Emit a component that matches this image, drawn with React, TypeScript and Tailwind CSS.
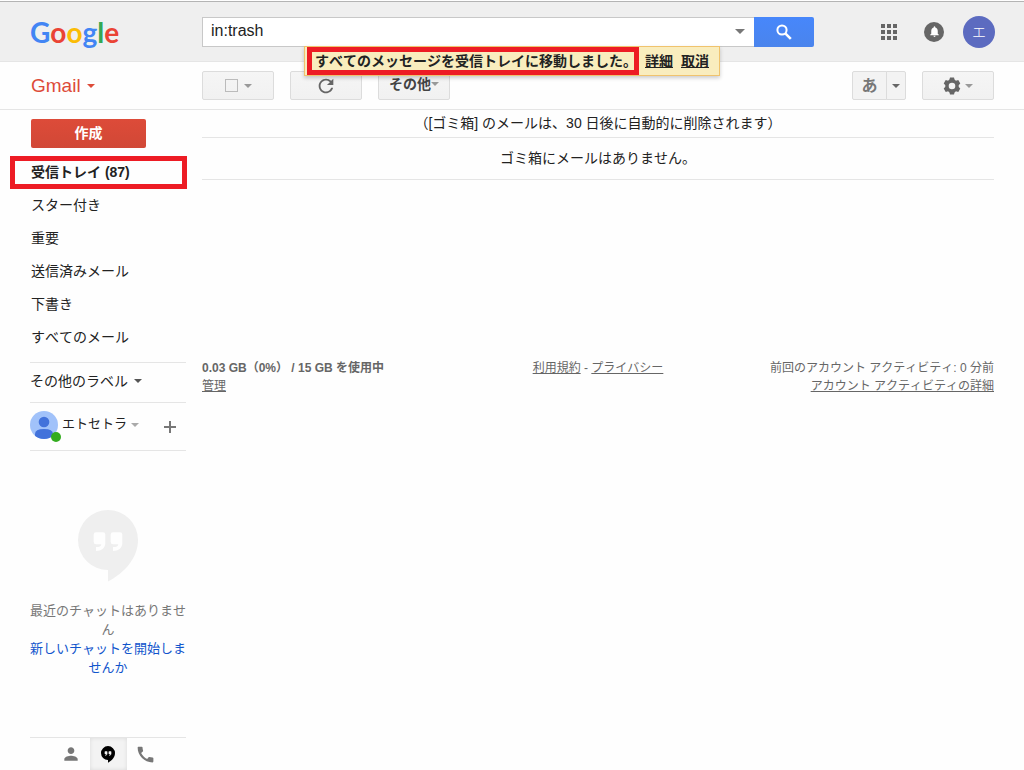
import React, { useState } from 'react';
import { MdCall, MdNotifications, MdPerson, MdRefresh } from 'react-icons/md';

const folders = [
    { id: 'inbox', label: '受信トレイ (87)', unread: true },
    { id: 'starred', label: 'スター付き' },
    { id: 'important', label: '重要' },
    { id: 'sent', label: '送信済みメール' },
    { id: 'drafts', label: '下書き' },
    { id: 'all', label: 'すべてのメール' }
];

const logoLetters = [
    { char: 'G', color: 'text-[#4285f4]' },
    { char: 'o', color: 'text-[#ea4335]' },
    { char: 'o', color: 'text-[#fbbc05]' },
    { char: 'g', color: 'text-[#4285f4]' },
    { char: 'l', color: 'text-[#34a853]' },
    { char: 'e', color: 'text-[#ea4335]' }
];

const Caret = ({ className = 'h-1 w-2' }: { className?: string }) => (
    <svg viewBox="0 0 8 4" className={`shrink-0 fill-current ${className}`} aria-hidden="true">
        <path d="M0 0h8L4 4z" />
    </svg>
);

const AppsIcon = () => (
    <svg viewBox="0 0 16 16" className="h-4 w-4 fill-[#666]" aria-hidden="true">
        {[0, 6, 12].map(y => [0, 6, 12].map(x => <rect key={`${x}-${y}`} x={x} y={y} width="4" height="4" />))}
    </svg>
);

const SearchIcon = () => (
    <svg viewBox="0 0 16 16" className="h-4 w-4" fill="none" stroke="currentColor" aria-hidden="true">
        <circle cx="6" cy="6" r="4.600" strokeWidth="2" />
        <path d="M9.300 9.300L14.800 14.800" strokeWidth="2.600" />
    </svg>
);

const GearIcon = () => (
    <svg viewBox="0 0 18 18" className="h-[18px] w-[18px] text-[#666]" aria-hidden="true">
        <circle cx="9" cy="9" r="5" fill="none" stroke="currentColor" strokeWidth="3.4" />
        {[0, 60, 120, 180, 240, 300].map(angle => (
            <path key={angle} d="M6.2 3.6L7 .6h4l.8 3z" fill="currentColor" transform={`rotate(${angle} 9 9)`} />
        ))}
    </svg>
);

const HangoutsIcon = ({ className = '' }: { className?: string }) => (
    <svg viewBox="0 0 60 72" className={className} aria-hidden="true">
        <path fillRule="evenodd" d="M30 0A30 30 0 0 0 30 60V71.5C48 62 60 47 60 30A30 30 0 0 0 30 0ZM18 22.300H25Q27.300 22.300 27.300 24.600V33C27.300 38 23.500 41 18 41V37C21.500 37 23.300 36.300 23.300 34.200H18Q15.700 34.200 15.700 32V24.600Q15.700 22.300 18 22.300ZM35 22.300H42Q44.300 22.300 44.300 24.600V33C44.300 38 40.500 41 35 41V37C38.500 37 40.300 36.300 40.300 34.200H35Q32.700 34.200 32.700 32V24.600Q32.700 22.300 35 22.300Z" />
    </svg>
);

const toolButton = 'flex h-[29px] w-[72px] items-center justify-center border border-[#dcdcdc] bg-linear-to-b from-[#f5f5f5] to-[#f1f1f1] rounded-xs text-[#444]';

const Header = () => {
    const [query, setQuery] = useState('in:trash');

    return (
        <header className="flex h-[61px] items-center border-t border-b border-t-[#b4b4b4] border-b-[#e5e5e5] bg-[#efefef] pr-[29px] pl-[30px]">
            <a href="#" aria-label="Google" className="w-[172px] shrink-0 font-['Lato',sans-serif] text-[28px] leading-8 font-bold">
                {logoLetters.map((letter, i) => (
                    <span key={i} className={letter.color}>{letter.char}</span>
                ))}
            </a>
            <form className="flex h-[30px] max-w-[612px] flex-1" onSubmit={(e) => e.preventDefault()}>
                <div className="flex flex-1 items-center border border-r-0 border-[#c8c8c8] bg-white">
                    <input
                        type="text"
                        aria-label="メールを検索"
                        className="h-full min-w-0 flex-1 pb-0.5 pl-2 text-base leading-6 text-[#222] outline-none"
                        value={query}
                        onChange={(e) => setQuery(e.target.value)}
                    />
                    <button type="button" aria-label="検索オプション" className="flex h-full w-7 items-center justify-center text-[#777]">
                        <Caret className="h-[5px] w-2.5" />
                    </button>
                </div>
                <button type="submit" aria-label="検索" className="flex w-[60px] items-center justify-center rounded-r-xs bg-linear-to-b from-[#4787fb] to-[#4a84ec] text-white">
                    <SearchIcon />
                </button>
            </form>
            <div className="ml-auto flex items-center">
                <button aria-label="アプリ" className="mr-[27px]"><AppsIcon /></button>
                <button aria-label="通知" className="mr-[19px] flex h-5 w-5 items-center justify-center rounded-full bg-[#666] text-white">
                    <MdNotifications className="h-[13px] w-[13px]" />
                </button>
                <button aria-label="アカウント" className="h-8 w-8 rounded-full bg-[#5c6bc0] text-sm leading-8 font-light text-white">エ</button>
            </div>
        </header>
    );
};

const Notice = () => (
    <div role="status" className="absolute top-[46px] left-1/2 flex h-[30px] -translate-x-1/2 items-center gap-2 border border-[#f0c36d] bg-[#f9edbe] px-2.5 text-sm leading-5 font-bold whitespace-nowrap text-[#222] shadow-[0_2px_4px_rgba(0,0,0,0.2)]">
        <span className="relative">
            すべてのメッセージを受信トレイに移動しました。
            <span className="absolute -inset-y-1 -right-0.5 -left-2 border-[5px] border-[#ed1c24]" />
        </span>
        <a href="#" className="underline">詳細</a>
        <a href="#" className="underline">取消</a>
    </div>
);

const Toolbar = () => (
    <div className="flex h-12 items-center border-b border-[#e5e5e5] pr-[30px] pl-[30px]">
        <div className="w-[172px] shrink-0 pl-px">
            <button className="flex items-center gap-1.5 text-[19px] leading-6 text-[#dd4b39]">
                Gmail <Caret />
            </button>
        </div>
        <div className="flex gap-4">
            <div className={`${toolButton} gap-1.5`}>
                <input type="checkbox" aria-label="選択" className="h-[13px] w-[13px] appearance-none border border-[#bbb]" />
                <button aria-label="選択メニュー" className="text-[#999]"><Caret /></button>
            </div>
            <button aria-label="更新" className={toolButton}><MdRefresh className="h-[22px] w-[22px] text-[#666]" /></button>
            <button className={`${toolButton} pb-1 text-sm font-bold`}>
                その他 <Caret className="h-1 w-2 text-[#999]" />
            </button>
        </div>
        <div className="ml-auto flex gap-4">
            <div className="flex">
                <button className="h-[29px] w-[35px] rounded-l-xs border border-[#dcdcdc] bg-[#f3f3f3] text-base leading-6 font-bold text-[#777]">あ</button>
                <button aria-label="入力ツールを選択" className="-ml-px flex h-[29px] w-5 items-center justify-center rounded-r-xs border border-[#dcdcdc] bg-[#f3f3f3] text-[#666]">
                    <Caret />
                </button>
            </div>
            <button aria-label="設定" className={`${toolButton} gap-1`}>
                <GearIcon />
                <Caret className="h-1 w-2 text-[#999]" />
            </button>
        </div>
    </div>
);

const Sidebar = () => (
    <aside className="flex w-[186px] shrink-0 flex-col pl-[30px] text-sm text-[#222]">
        <button className="mt-[9px] ml-px h-[29px] w-[115px] rounded-xs bg-linear-to-b from-[#dd4b39] to-[#d14836] pb-0.5 font-bold text-white">作成</button>
        <nav className="mt-2 pb-2">
            {folders.map(folder => (
                <a
                    key={folder.id}
                    href={`#${folder.id}`}
                    className={`relative block h-[33px] pl-px leading-8 ${folder.unread ? 'font-bold' : ''}`}
                >
                    {folder.label}
                    {folder.unread && <span className="absolute inset-y-0 -right-px -left-5 border-[5px] border-[#ed1c24]" />}
                </a>
            ))}
        </nav>
        <button className="flex h-10 items-center gap-1.5 border-t border-[#e5e5e5] pb-1">
            その他のラベル <Caret className="h-1 w-2 text-[#555]" />
        </button>
        <div className="flex h-[49px] items-center border-y border-[#e5e5e5] pb-1">
            <div className="relative">
                <svg viewBox="0 0 28 28" className="h-7 w-7" aria-hidden="true">
                    <clipPath id="avatar"><circle cx="14" cy="14" r="14" /></clipPath>
                    <g clipPath="url(#avatar)">
                        <rect width="28" height="28" fill="#a1c2fa" />
                        <circle cx="14" cy="11" r="5.3" fill="#4272db" />
                        <path d="M5 28v-5q0-5 9-5t9 5v5z" fill="#4272db" />
                    </g>
                </svg>
                <span className="absolute -right-[3px] -bottom-[3px] h-2.5 w-2.5 rounded-full bg-[#33ac1f]" />
            </div>
            <button className="ml-1 flex items-center gap-1 text-[13px]">
                エトセトラ <Caret className="h-1 w-2 text-[#aaa]" />
            </button>
            <button aria-label="新しい会話" className="mt-1 mr-2.5 ml-auto text-[#777]">
                <svg viewBox="0 0 12 12" className="h-3 w-3 fill-current" aria-hidden="true">
                    <path d="M5 0h2v5h5v2H7v5H5V7H0V5h5z" />
                </svg>
            </button>
        </div>
        <section className="flex flex-col items-center pt-[59px] text-center text-[13px] leading-[19px]">
            <HangoutsIcon className="h-[72px] w-[60px] fill-[#efefef]" />
            <p className="mt-[19px] text-[#777]">最近のチャットはありません</p>
            <a href="#chat" className="text-[#1155cc]">新しいチャットを開始しませんか</a>
        </section>
        <div className="mt-auto flex h-[33px] justify-center border-t border-[#e5e5e5] text-[#777]">
            <button aria-label="連絡先" className="flex w-[37px] items-center justify-center"><MdPerson className="h-5 w-5" /></button>
            <button aria-label="ハングアウト" className="flex w-[37px] items-center justify-center bg-[#f3f3f3] shadow-[inset_0_0_4px_rgba(0,0,0,0.1)]">
                <HangoutsIcon className="h-[17px] w-3.5 fill-black" />
            </button>
            <button aria-label="電話" className="flex w-[37px] items-center justify-center"><MdCall className="h-[21px] w-[21px]" /></button>
        </div>
    </aside>
);

const TrashView = () => (
    <main className="mr-[30px] ml-4 flex-1">
        <p className="h-7 border-b border-[#e5e5e5] text-center text-sm leading-[26px] text-[#222]">
            （[ゴミ箱] のメールは、30 日後に自動的に削除されます）
        </p>
        <p className="h-[42px] border-b border-[#e5e5e5] text-center text-sm leading-10 text-[#222]">
            ゴミ箱にメールはありません。
        </p>
        <footer className="mt-[179px] grid grid-cols-[1fr_auto_1fr] text-xs leading-[18px] text-[#666]">
            <div>
                <p className="font-bold">0.03 GB（0%） / 15 GB を使用中</p>
                <a href="#storage" className="underline">管理</a>
            </div>
            <div>
                <a href="#terms" className="underline">利用規約</a> - <a href="#privacy" className="underline">プライバシー</a>
            </div>
            <div className="text-right">
                <p>前回のアカウント アクティビティ: 0 分前</p>
                <a href="#activity" className="underline">アカウント アクティビティの詳細</a>
            </div>
        </footer>
    </main>
);

export default function App() {
    return (
        <div lang="ja" className="relative flex min-h-screen flex-col bg-[#fefefe] pt-px font-['Liberation_Sans','Noto_Sans_CJK_JP',sans-serif] [font-kerning:none]">
            <Header />
            <Toolbar />
            <div className="flex flex-1">
                <Sidebar />
                <TrashView />
            </div>
            <Notice />
        </div>
    );
}
